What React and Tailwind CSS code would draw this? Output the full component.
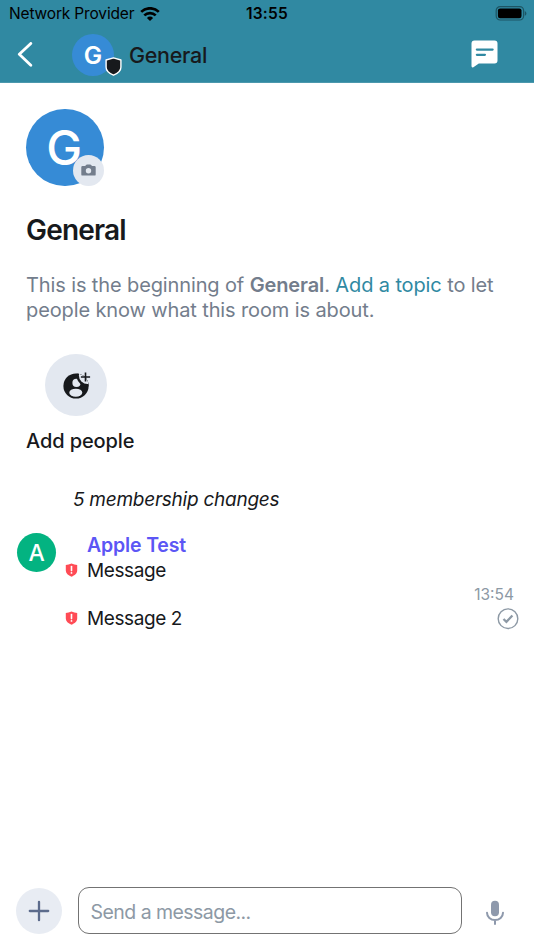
function StatusBar() {
  return (
    <div className="relative flex h-7 items-center justify-between pl-[9px] pr-[7px] text-black">
      <div className="flex items-center gap-[6px]">
        <span className="text-[15.5px] leading-7 tracking-[-0.16px]">Network Provider</span>
        <svg className="-mt-px" width="20" height="14" viewBox="0 0 20 14" fill="none" stroke="currentColor" strokeWidth="2.7">
          <path d="M1.2 4.9a12.5 12.5 0 0 1 17.6 0" />
          <path d="M4.3 8.400a8.200 8.200 0 0 1 11.400 0" />
          <path d="M10 14 6.900 10.900a4.400 4.400 0 0 1 6.200 0Z" fill="currentColor" stroke="none" />
        </svg>
      </div>
      <span className="absolute left-[246px] text-[15.5px] font-semibold leading-7 tracking-[0.2px]">13:55</span>
      <svg className="-mt-[2px]" width="32" height="15" viewBox="0 0 32 15">
        <rect x="1.200" y="0.600" width="27.400" height="13.400" rx="4" fill="none" stroke="#1d5564" strokeWidth="1.200" />
        <rect x="2.900" y="2.400" width="23.600" height="9.800" rx="2.200" fill="#000" />
        <path d="M29.800 5v4.800q1.600-.7 1.600-2.400T29.800 5Z" fill="#1d5564" />
      </svg>
    </div>
  )
}

function Header() {
  return (
    <header className="h-[83px] shrink-0 border-b border-[#4b98ad] bg-[#3089a2]">
      <StatusBar />
      <div className="flex h-[53px] items-center pl-[17px] pr-9">
        <svg className="shrink-0" width="16" height="26" viewBox="0 0 16 26" fill="none" stroke="#fff" strokeWidth="2.8" strokeLinecap="round" strokeLinejoin="round">
          <path d="M13.800 1.400 2.300 12.300l11.500 10.900" />
        </svg>
        <div className="relative ml-[39px] flex size-[42px] shrink-0 items-center justify-center rounded-full bg-[#368bd6] text-[25px] font-semibold text-white">
          <span className="mt-px text-[24.500px]">G</span>
          <svg className="absolute left-[33px] top-[23px]" width="17" height="19" viewBox="0 0 17 19">
            <path d="M8.500.9 15.900 3v7.200c0 3.700-3.200 6.200-7.400 8-4.200-1.800-7.400-4.300-7.400-8V3Z" fill="#17191c" stroke="#fff" strokeWidth="1.400" strokeLinejoin="round" />
          </svg>
        </div>
        <h1 className="ml-[15px] mt-[2px] flex-1 text-[21.500px] font-medium tracking-[-0.3px] text-[#17191c]">General</h1>
        <svg className="-mt-px" width="27" height="28" viewBox="0 0 27 28">
          <path d="M3.500.5h20A3 3 0 0 1 26.500 3.500v17a3 3 0 0 1-3 3H7.800L2.400 27.300Q.5 28 .5 26V3.500a3 3 0 0 1 3-3Z" fill="#fff" />
          <path d="M5.900 9.600h15.700M5.900 14.800h8" stroke="#3089a2" strokeWidth="2.300" strokeLinecap="round" />
        </svg>
      </div>
    </header>
  )
}

function WarningShield() {
  return (
    <svg className="mr-[9px] -mt-[2px] shrink-0" width="13" height="14" viewBox="0 0 13 14">
      <path d="M6.500.4Q9.500 1.800 12.200 1.900v5.600c0 3-2.500 4.900-5.700 6.200C3.200 12.400.8 10.500.8 7.500V1.900Q3.500 1.800 6.500.4Z" fill="#ff4b55" />
      <path d="M6.500 3.600v4" stroke="#fff" strokeWidth="1.600" strokeLinecap="round" />
      <circle cx="6.500" cy="9.900" r=".9" fill="#fff" />
    </svg>
  )
}

function AddPeopleIcon() {
  return (
    <svg width="30" height="30" viewBox="0 0 30 30">
      <clipPath id="face">
        <circle cx="15" cy="16" r="12.600" />
      </clipPath>
      <g clipPath="url(#face)">
        <rect width="30" height="30" fill="#17191c" />
        <circle cx="15.500" cy="12.900" r="4.100" fill="#e3e8f0" />
        <ellipse cx="14.800" cy="22.700" rx="6.500" ry="4" fill="#e3e8f0" />
        <circle cx="26.600" cy="5.400" r="11" fill="#17191c" />
        <circle cx="26.600" cy="5.400" r="8.700" fill="#e3e8f0" />
      </g>
      <path d="M24.500 2.400v9.200M19.900 7h9.200" stroke="#17191c" strokeWidth="1.600" />
    </svg>
  )
}

function RoomIntro() {
  return (
    <section className="pl-[26px] pt-[25.500px]">
      <div className="relative flex size-[77.500px] items-center justify-center rounded-full bg-[#368bd6] text-[48px] font-medium text-white">
        <span className="-ml-px mt-px">G</span>
        <div className="absolute bottom-0 right-0 flex size-[31px] items-center justify-center rounded-full bg-[#e3e8f0]">
          <svg width="15" height="13" viewBox="0 0 15 13">
            <path fillRule="evenodd" d="M1.500 2h2.700L5.300.8Q5.700.4 6.300.4h2.600q.6 0 1 .4L11 2h2.500q1.200 0 1.200 1.200v7.200q0 1.200-1.200 1.200h-12Q.3 11.600.3 10.400V3.200Q.3 2 1.500 2Zm6 2.100a2.700 2.700 0 1 0 0 5.400 2.700 2.700 0 0 0 0-5.400Z" fill="#737d8c" />
          </svg>
        </div>
      </div>
      <h2 className="mt-[26px] text-[28px] font-semibold leading-[36px] tracking-[-0.800px] text-[#17191c]">General</h2>
      <p className="mt-[25px] whitespace-nowrap text-[20px] leading-[25px] tracking-[-0.120px] text-[#737d8c]">
        This is the beginning of <b className="font-semibold">General</b>. <span className="text-[#3089a2]">Add a topic</span> to let
        <br />
        people know what this room is about.
      </p>
      <div className="ml-[19px] mt-[31px] flex size-[62px] items-center justify-center rounded-full bg-[#e3e8f0]">
        <AddPeopleIcon />
      </div>
      <div className="mt-[13px] text-[20px] font-medium leading-[25px] tracking-[-0.100px] text-[#17191c]">Add people</div>
    </section>
  )
}

function Timeline() {
  return (
    <section className="text-[19px] leading-[25px] tracking-[-0.400px] text-[#17191c]">
      <div className="ml-[73px] mt-[33px] italic tracking-[-0.250px]">5 membership changes</div>
      <div className="mt-[21px] flex pl-[17px]">
        <div className="flex size-[39px] shrink-0 items-center justify-center rounded-full bg-[#03b381] text-[23px] font-medium text-white">
          <span className="mt-px">A</span>
        </div>
        <div className="ml-[9px]">
          <div className="ml-[22px] text-[19.500px] font-semibold tracking-[-0.150px] text-[#5c56f5]">Apple Test</div>
          <div className="flex h-[25px] items-center">
            <WarningShield />
            Message
          </div>
        </div>
      </div>
      <div className="mr-5 mt-px text-right text-[15.500px] leading-[21px] tracking-normal text-[#8d99a5]">13:54</div>
      <div className="flex h-[27px] items-center pl-[65px] pr-[15px]">
        <WarningShield />
        <span className="-mt-px flex-1">Message 2</span>
        <svg width="22" height="22" viewBox="0 0 22 22" fill="none" stroke="#8d99a5">
          <circle cx="11" cy="10.700" r="9.800" strokeWidth="1.400" />
          <path d="m6.500 11 2.900 2.900 6-6.400" strokeWidth="2.300" />
        </svg>
      </div>
    </section>
  )
}

function Composer() {
  return (
    <footer className="mt-auto flex items-center pb-4 pl-4 pr-[29px]">
      <button className="flex size-[46px] items-center justify-center rounded-full bg-[#e8ecf3]">
        <svg width="22" height="22" viewBox="0 0 22 22" stroke="#5c6b8c" strokeWidth="2.300" strokeLinecap="round">
          <path d="M11 1.800v18.400M1.800 11h18.400" />
        </svg>
      </button>
      <div className="ml-[15.600px] flex h-[47px] w-[384px] items-center rounded-[11px] border-[1.400px] border-[#737373] px-3 pt-[5px] text-[19.500px] tracking-[-0.550px] text-[#8d99a5]">
        Send a message...
      </div>
      <svg className="ml-auto mt-1" width="20" height="26" viewBox="0 0 20 26" fill="none" stroke="#8e99ac" strokeWidth="2" strokeLinecap="round">
        <rect x="6" y=".8" width="8" height="15.500" rx="4" fill="#8e99ac" stroke="none" />
        <path d="M2 12.800a8 7.200 0 0 0 16 0M10 20.500v3.500" />
      </svg>
    </footer>
  )
}

export default function App() {
  return (
    <div className="flex h-screen flex-col overflow-hidden bg-white font-['Inter',sans-serif]">
      <Header />
      <RoomIntro />
      <Timeline />
      <Composer />
    </div>
  )
}
